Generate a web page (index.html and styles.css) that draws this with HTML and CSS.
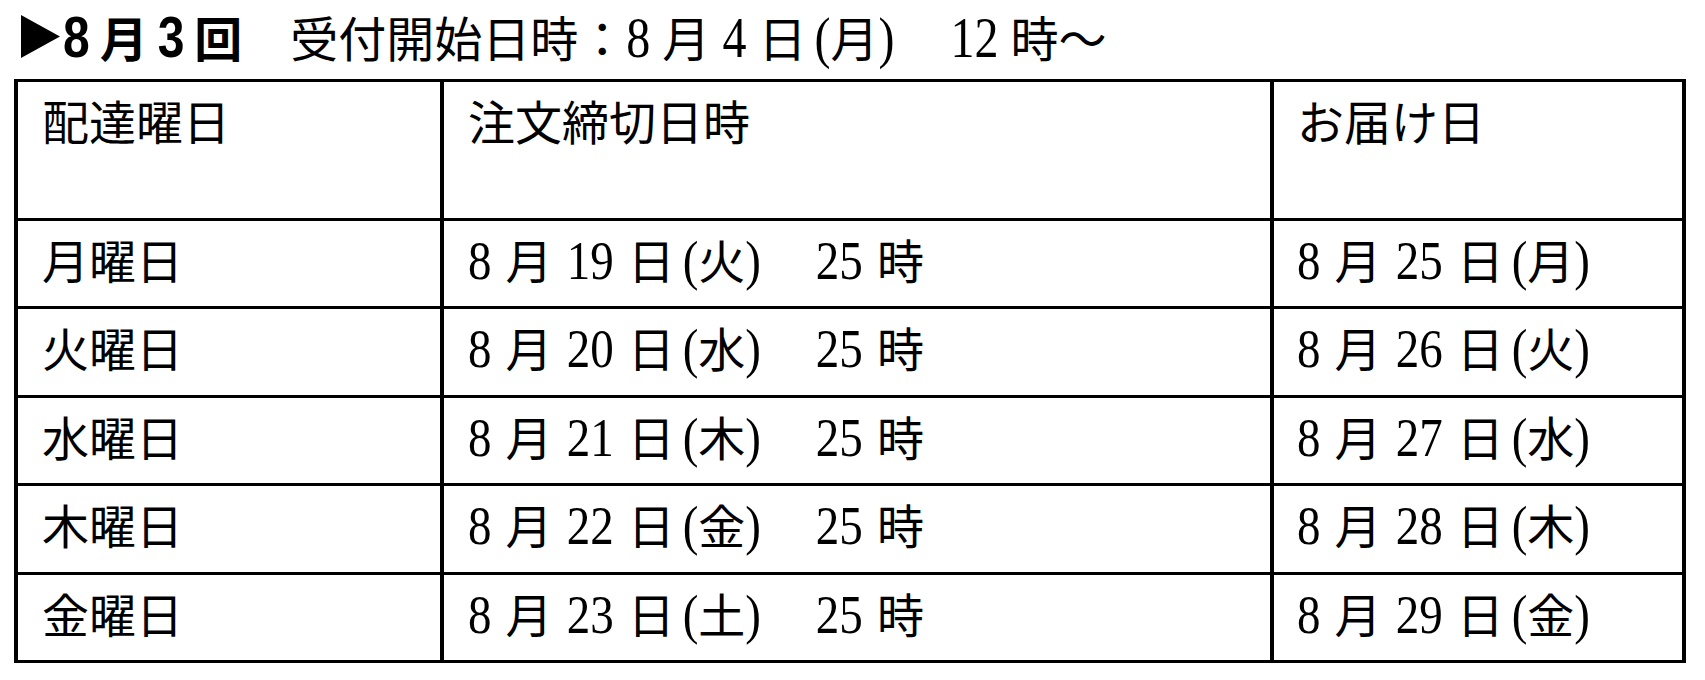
FILE: index.html
```html
<!DOCTYPE html>
<html lang="ja">
<head>
<meta charset="utf-8">
<title>8月3回 受付</title>
<link rel="stylesheet" href="styles.css">
</head>
<body>
<div class="title"><svg class="tri" width="39" height="43" viewBox="0 0 39 43" aria-label="▶"><polygon points="0,0 39,21.5 0,43"/></svg><span class="lead"><span class="n">8</span> 月 <span class="n">3</span> 回</span>　受付開始日時：<span class="n">8</span> 月 <span class="n">4</span> 日<span class="n lp">(</span>月<span class="n rp">)</span>　<span class="n">12</span> 時～</div>
<div class="sched" role="table">
  <div class="cell c1">配達曜日</div>
  <div class="cell c2">注文締切日時</div>
  <div class="cell c3">お届け日</div>

  <div class="cell c1">月曜日</div>
  <div class="cell c2"><span class="n">8</span> 月 <span class="n">19</span> 日<span class="n lp">(</span>火<span class="n rp">)</span>　<span class="n">25</span> 時</div>
  <div class="cell c3"><span class="n">8</span> 月 <span class="n">25</span> 日<span class="n lp">(</span>月<span class="n rp">)</span></div>

  <div class="cell c1">火曜日</div>
  <div class="cell c2"><span class="n">8</span> 月 <span class="n">20</span> 日<span class="n lp">(</span>水<span class="n rp">)</span>　<span class="n">25</span> 時</div>
  <div class="cell c3"><span class="n">8</span> 月 <span class="n">26</span> 日<span class="n lp">(</span>火<span class="n rp">)</span></div>

  <div class="cell c1">水曜日</div>
  <div class="cell c2"><span class="n">8</span> 月 <span class="n">21</span> 日<span class="n lp">(</span>木<span class="n rp">)</span>　<span class="n">25</span> 時</div>
  <div class="cell c3"><span class="n">8</span> 月 <span class="n">27</span> 日<span class="n lp">(</span>水<span class="n rp">)</span></div>

  <div class="cell c1">木曜日</div>
  <div class="cell c2"><span class="n">8</span> 月 <span class="n">22</span> 日<span class="n lp">(</span>金<span class="n rp">)</span>　<span class="n">25</span> 時</div>
  <div class="cell c3"><span class="n">8</span> 月 <span class="n">28</span> 日<span class="n lp">(</span>木<span class="n rp">)</span></div>

  <div class="cell c1">金曜日</div>
  <div class="cell c2"><span class="n">8</span> 月 <span class="n">23</span> 日<span class="n lp">(</span>土<span class="n rp">)</span>　<span class="n">25</span> 時</div>
  <div class="cell c3"><span class="n">8</span> 月 <span class="n">29</span> 日<span class="n lp">(</span>金<span class="n rp">)</span></div>
</div>
</body>
</html>
```
FILE: styles.css
```css
html, body {
  margin: 0;
  padding: 0;
  background: #fff;
  color: #000;
}

.title {
  height: 48px;
  padding: 17px 0 14px 21px;
  font: 48px/48px "Liberation Serif", "Noto Sans CJK JP", serif;
  white-space: nowrap;
}

.tri {
  vertical-align: -1px;
  margin: -6px 3px 0 0;
  fill: #000;
}

.lead {
  font-family: "Liberation Sans", "Noto Sans CJK JP", sans-serif;
  font-weight: bold;
  word-spacing: -0.07em;
  margin-right: 0;
}

.n {
  display: inline-block;
  transform: scaleY(1.18);
  transform-origin: 50% 0.84em;
}

.lp { padding-left: 0.167em; }
.rp { padding-right: 0.167em; }

.sched {
  display: grid;
  grid-template-columns: 422px 826px 408px;
  grid-template-rows: 136px repeat(5, 85.4px);
  gap: 3px 4px;
  padding: 3px 4px;
  width: 1664px;
  margin-left: 14px;
  background: #000;
}

.cell {
  background: #fff;
  padding-top: 19px;
  font: 47px/47px "Liberation Serif", "Noto Sans CJK JP", serif;
  word-spacing: 0.05em;
  white-space: nowrap;
  overflow: hidden;
}

.c1 { padding-left: 24px; }
.c2 { padding-left: 24px; }
.c3 { padding-left: 23px; }
```
